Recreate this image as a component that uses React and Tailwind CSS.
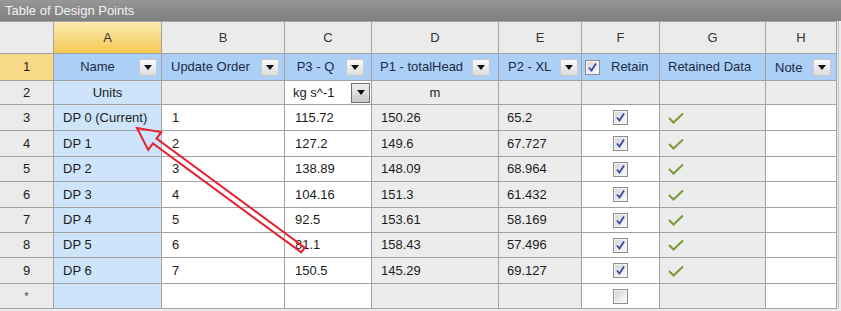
const cols = ['A', 'B', 'C', 'D', 'E', 'F', 'G', 'H'];

const rows = [
  ['DP 0 (Current)', '1', '115.72', '150.26', '65.2'],
  ['DP 1', '2', '127.2', '149.6', '67.727'],
  ['DP 2', '3', '138.89', '148.09', '68.964'],
  ['DP 3', '4', '104.16', '151.3', '61.432'],
  ['DP 4', '5', '92.5', '153.61', '58.169'],
  ['DP 5', '6', '81.1', '158.43', '57.496'],
  ['DP 6', '7', '150.5', '145.29', '69.127'],
];

function DropBtn() {
  return (
    <div className="w-[18px] h-[17px] shrink-0 rounded-[2px] border border-[#cacaca] bg-linear-to-b from-[#fbfbfb] to-[#dcdcdc] flex items-center justify-center">
      <div className="w-0 h-0 border-l-[4px] border-r-[4px] border-t-[5px] border-l-transparent border-r-transparent border-t-[#111]" />
    </div>
  );
}

function CheckBox({ checked }) {
  return (
    <svg width="15" height="15" viewBox="0 0 15 15">
      <defs>
        <linearGradient id="cbg" x1="0" y1="0" x2="1" y2="1">
          <stop offset="0" stopColor="#d6d6d6" />
          <stop offset="1" stopColor="#fafafa" />
        </linearGradient>
      </defs>
      <rect x="0.5" y="0.5" width="14" height="14" fill="#f4f4f4" stroke="#8e8e8e" />
      <rect x="2" y="2" width="11" height="11" fill="url(#cbg)" />
      {checked && (
        <path d="M4 7.5 L6.5 10.5 L11 3.5" fill="none" stroke="#3848a8" strokeWidth="1.8" />
      )}
    </svg>
  );
}

function GreenCheck() {
  return (
    <svg width="16" height="12" viewBox="0 0 16 12">
      <path d="M1 6 L5.5 10.5 L15 1.5" fill="none" stroke="#7a9a36" strokeWidth="2" />
    </svg>
  );
}

function Cell({ bg, className = '', children }) {
  return <div className={`${bg} flex items-center min-w-0 ${className}`}>{children}</div>;
}

export default function App() {
  return (
    <div className="relative w-[841px] h-[311px] overflow-hidden bg-[#ececec] font-['Liberation_Sans',Arial,sans-serif] text-[13px] text-[#1c1c1c]">
      <div className="h-[21px] bg-linear-to-b from-[#969696] to-[#7f7f7f] text-[#f2f2f2] flex items-center pl-[5px]">
        Table of Design Points
      </div>
      <div className="flex">
        <div className="grid grid-cols-[53px_107px_122px_86px_126px_82px_77px_105px_70px] grid-rows-[31px_26px_23px_25px_25px_24px_25px_24px_24px_25px_24px] gap-px bg-[#a3a3a3] pt-px pb-px pr-px">
          {/* column letters */}
          <Cell bg="bg-[#ebebeb]" />
          {cols.map((c) => (
            <Cell
              key={c}
              bg={c === 'A' ? 'bg-linear-to-b from-[#fcebb0] to-[#f4c84e]' : 'bg-[#ebebeb]'}
              className="justify-center text-[#333]"
            >
              {c}
            </Cell>
          ))}

          {/* row 1 */}
          <Cell bg="bg-[#f8d988]" className="justify-center">1</Cell>
          <Cell bg="bg-[#abcff5]" className="pr-[4px]">
            <span className="flex-1 text-center pl-[2px] text-[#1d2a46]">Name</span>
            <DropBtn />
          </Cell>
          <Cell bg="bg-[#abcff5]" className="pl-[9px] pr-[5px]">
            <span className="flex-1 text-[#1d2a46]">Update Order</span>
            <DropBtn />
          </Cell>
          <Cell bg="bg-[#abcff5]" className="pr-[7px]">
            <span className="flex-1 text-center text-[#1d2a46]">P3 - Q</span>
            <DropBtn />
          </Cell>
          <Cell bg="bg-[#abcff5]" className="pl-[8px] pr-[8px]">
            <span className="flex-1 text-[#1d2a46]">P1 - totalHead</span>
            <DropBtn />
          </Cell>
          <Cell bg="bg-[#abcff5]" className="pl-[9px] pr-[3px]">
            <span className="flex-1 text-[#1d2a46]">P2 - XL</span>
            <DropBtn />
          </Cell>
          <Cell bg="bg-[#abcff5]" className="pl-[3px] gap-[11px]">
            <CheckBox checked />
            <span className="text-[#1d2a46]">Retain</span>
          </Cell>
          <Cell bg="bg-[#abcff5]" className="pl-[8px]">
            <span className="text-[#1d2a46]">Retained Data</span>
          </Cell>
          <Cell bg="bg-[#abcff5]" className="pl-[9px] pr-[5px]">
            <span className="flex-1 text-[#1d2a46] pt-[2px]">Note</span>
            <DropBtn />
          </Cell>

          {/* row 2 */}
          <Cell bg="bg-[#ebebeb]" className="justify-center">2</Cell>
          <Cell bg="bg-[#cde4fb]" className="justify-center">Units</Cell>
          <Cell bg="bg-[#ececec]" />
          <Cell bg="bg-white" className="pl-[8px] pr-[1px]">
            <span className="flex-1">kg s^-1</span>
            <div className="w-[19px] h-[20px] border border-[#6e6e6e] bg-linear-to-b from-[#f0f0f0] to-[#c9c9c9] flex items-center justify-center">
              <div className="w-0 h-0 border-l-[4px] border-r-[4px] border-t-[5px] border-l-transparent border-r-transparent border-t-[#111]" />
            </div>
          </Cell>
          <Cell bg="bg-[#ececec]" className="justify-center">m</Cell>
          <Cell bg="bg-[#ececec]" />
          <Cell bg="bg-[#ececec]" />
          <Cell bg="bg-[#ececec]" />
          <Cell bg="bg-[#ececec]" />

          {/* data rows */}
          {rows.map((r, i) => [
            <Cell key={`h${i}`} bg="bg-[#ebebeb]" className="justify-center">{i + 3}</Cell>,
            <Cell key={`a${i}`} bg="bg-[#cde4fb]" className="pl-[9px]">{r[0]}</Cell>,
            <Cell key={`b${i}`} bg="bg-white" className="pl-[10px]">{r[1]}</Cell>,
            <Cell key={`c${i}`} bg="bg-white" className="pl-[10px]">{r[2]}</Cell>,
            <Cell key={`d${i}`} bg="bg-[#ececec]" className="pl-[9px]">{r[3]}</Cell>,
            <Cell key={`e${i}`} bg="bg-[#ececec]" className="pl-[8px]">{r[4]}</Cell>,
            <Cell key={`f${i}`} bg="bg-white" className="justify-center">
              <CheckBox checked />
            </Cell>,
            <Cell key={`g${i}`} bg="bg-[#ececec]" className="pl-[8px]">
              <GreenCheck />
            </Cell>,
            <Cell key={`x${i}`} bg="bg-white" />,
          ])}

          {/* new row */}
          <Cell bg="bg-[#ebebeb]" className="justify-center text-[11px] text-[#444]">*</Cell>
          <Cell bg="bg-[#cde4fb]" />
          <Cell bg="bg-white" />
          <Cell bg="bg-white" />
          <Cell bg="bg-[#ececec]" />
          <Cell bg="bg-[#ececec]" />
          <Cell bg="bg-white" className="justify-center">
            <CheckBox />
          </Cell>
          <Cell bg="bg-[#ececec]" />
          <Cell bg="bg-white" />
        </div>
        <div className="w-px h-[288px] ml-px bg-[#c4c4c4]" />
      </div>

      <svg className="absolute inset-0 pointer-events-none" width="841" height="311" viewBox="0 0 841 311">
        <polygon
          points="137,128 161.2,132.1 156.5,138.6 304.8,247.6 301.2,252.4 152.9,143.4 148.2,149.9"
          fill="none"
          stroke="#e8212b"
          strokeWidth="2"
          strokeLinejoin="miter"
        />
      </svg>
    </div>
  );
}
